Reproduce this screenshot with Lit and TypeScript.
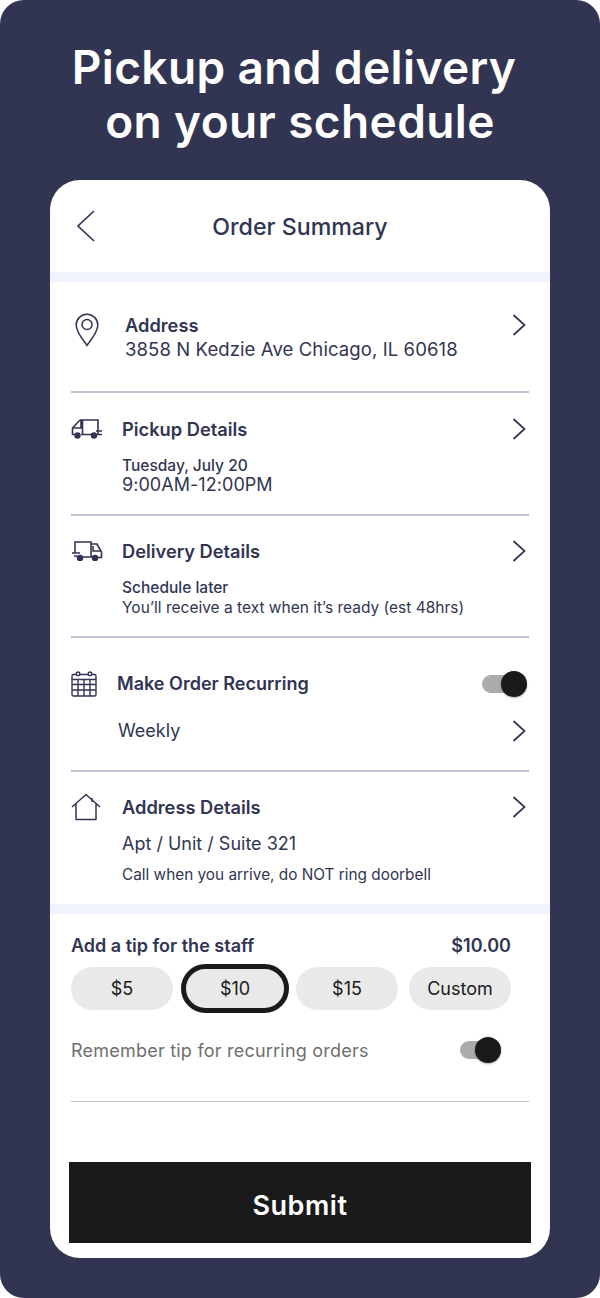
import { LitElement, html, css, svg } from "lit";
import { customElement } from "lit/decorators.js";

const chevron = html`<svg class="chev" width="14" height="24" viewBox="0 0 14 24"><path d="M1.5 2 L12.5 12 L1.5 22" fill="none" stroke="#313552" stroke-width="1.7"/></svg>`;

const pin = html`<svg width="24" height="34" viewBox="0 0 24 34" fill="none" stroke="#313552" stroke-width="1.5"><path d="M12 32.5 C10 29 1.2 20 1.2 12 A10.8 10.8 0 0 1 22.8 12 C22.8 20 14 29 12 32.5 Z"/><circle cx="12" cy="11.5" r="5"/></svg>`;

const truckL = html`<svg width="32" height="20" viewBox="0 0 32 20" fill="none" stroke="#313552" stroke-width="1.6"><path d="M9 1 H27 V15 M9 1 L1.5 9 V15.5 H4.5 M10 15.5 H21 M26 15.5 H31 M2 9 H10 V1 M11.5 15.5 V1 M25 12 H31"/><circle cx="6.5" cy="16.5" r="2.4" fill="#313552"/><circle cx="23" cy="16.5" r="2.4" fill="#313552"/></svg>`;

const truckR = html`<svg width="32" height="20" viewBox="0 0 32 20" fill="none" stroke="#313552" stroke-width="1.6"><path d="M4 12 V1 H20 V16 H12 M1 12 H9 M3 15 H6 M20 3 H26 L30.5 11 V16.5 H27 M20 16 H21 M22 5 V10 H30"/><circle cx="9" cy="17" r="2.5" fill="#313552"/><circle cx="24" cy="17" r="2.5" fill="#313552"/></svg>`;

const cal = html`<svg width="26" height="26" viewBox="0 0 26 26" fill="none" stroke="#313552" stroke-width="1.4"><rect x="1" y="3.5" width="24" height="21.5" rx="1.5"/>${svg`<path d="M1 8.5 H25 M1 13.5 H25 M1 19 H25 M7 8.5 V25 M13 8.5 V25 M19 8.5 V25" /><circle cx="7" cy="2.8" r="1.8" fill="#fff"/><circle cx="19" cy="2.8" r="1.8" fill="#fff"/>`}</svg>`;

const house = html`<svg width="30" height="28" viewBox="0 0 30 28" fill="none" stroke="#313552" stroke-width="1.5" stroke-linejoin="round"><path d="M1 14 L15 1.5 L29 14 M5 11 V26.5 H25 V11 M21 5 V9"/></svg>`;

@customElement("app-root")
export class AppRoot extends LitElement {
  static styles = css`
    :host { display: block; width: 600px; height: 1298px; background: #fff; font-family: Inter, "Liberation Sans", sans-serif; color: #313552; }
    * { box-sizing: border-box; }
    .page { width: 600px; height: 1298px; background: #313552; border-radius: 24px; padding-top: 40px; display: flex; flex-direction: column; align-items: center; }
    h1 { margin: 0; height: 140px; color: #fff; font-size: 46px; line-height: 54px; font-weight: 600; text-align: center; letter-spacing: 0.38px; white-space: nowrap; }
    .card { width: 500px; height: 1078px; background: #fff; border-radius: 30px; overflow: hidden; display: flex; flex-direction: column; }
    .head { height: 92px; padding: 0 26px; display: flex; align-items: center; position: relative; }
    .title { position: absolute; left: 0; right: 0; top: 31px; text-align: center; font-size: 23.2px; line-height: 32px; font-weight: 500; }
    .band { height: 10px; background: #f1f3fd; flex: none; }
    .sec { margin: 0 21px; border-bottom: 2px solid #c3c4d6; display: flex; flex-direction: column; flex: none; }
    .row { display: flex; align-items: center; }
    .grow { flex: 1; }
    .b { font-weight: 600; font-size: 18.25px; line-height: 24px; }
    .rec .b { font-size: 18.05px; }
    .addr { height: 111px; padding-top: 31px; flex-direction: row; align-items: flex-start; }
    .addr .ic { width: 54px; padding: 0 0 0 4px; }
    .addr .l { font-size: 18.5px; line-height: 25px; letter-spacing: 0.1px; }
    .pick { height: 123px; padding-top: 24px; }
    .deli { height: 122px; padding-top: 23px; }
    .rec { height: 134px; padding-top: 33px; }
    .adet { height: 132px; padding-top: 21px; border-bottom: 0; }
    .ic2 { width: 51px; display: flex; }
    .ic2.cal { width: 46px; }
    .sm { font-size: 15.5px; line-height: 20px; }
    .m { font-weight: 500; line-height: 21px; }
    .tl { font-size: 18px; line-height: 24px; margin-top: -3px; letter-spacing: 0.05px; }
    .sub { padding-left: 51px; margin-top: 14px; }
    .adv { padding-left: 51px; }
    .apt { margin-top: 11px; font-size: 18px; line-height: 24px; }
    .call { margin-top: 9px; font-size: 15.35px; }
    .toggle { width: 45px; height: 18px; background: #ababab; border-radius: 9px; position: relative; flex: none; margin-right: 2px; }
    .toggle::after { content: ""; position: absolute; right: 0; top: -4px; width: 26px; height: 26px; border-radius: 50%; background: #1a1a1a; box-shadow: 0 1px 2px rgba(0,0,0,.35); }
    .weekly { margin-top: 22px; padding-left: 47px; font-size: 18px; line-height: 24px; display: flex; align-items: center; justify-content: space-between; }
    .tip { margin: 0 21px; padding-top: 20px; height: 188px; border-bottom: 1.5px solid #bfc0d2; flex: none; }
    .tiph { width: 440px; display: flex; justify-content: space-between; font-weight: 600; font-size: 18px; line-height: 24px; }
    .pills { width: 440px; display: flex; margin-top: 9px; }
    .pill { width: 102px; height: 43px; border-radius: 22px; background: #e9e9e9; color: #1a1a1a; font-size: 18px; display: flex; align-items: center; justify-content: center; }
    .pill.on { width: 108px; height: 49px; margin: -3px 7px -3px 8px; border: 5px solid #1a1a1a; border-radius: 25px; }
    .pill.last { margin-left: 11px; }
    .rem { width: 430px; margin-top: 29px; display: flex; justify-content: space-between; align-items: center; color: #6f6f6f; font-size: 18px; letter-spacing: 0.22px; line-height: 24px; }
    .rem .toggle { width: 41px; margin: 0 0 2px; }
    .submit { margin: 60px 19px 0; height: 81px; padding-top: 6px; flex: none; background: #1a1a1a; color: #fff; font-size: 27px; font-weight: 600; letter-spacing: 0.55px; display: flex; align-items: center; justify-content: center; }
    .chev { flex: none; margin-right: 3px; }
  `;

  render() {
    return html`<div class="page">
      <h1>Pickup and delivery&nbsp;<br />on your schedule</h1>
      <div class="card">
        <div class="head">
          <svg width="20" height="34" viewBox="0 0 20 34"><path d="M18 2 L2 17 L18 32" fill="none" stroke="#313552" stroke-width="1.7"/></svg>
          <div class="title">Order Summary</div>
        </div>
        <div class="band"></div>
        <div class="sec addr">
          <div class="ic">${pin}</div>
          <div class="grow"><div class="b">Address</div><div class="l">3858 N Kedzie Ave Chicago, IL 60618</div></div>
          <div>${chevron}</div>
        </div>
        <div class="sec pick">
          <div class="row"><div class="ic2">${truckL}</div><div class="b grow">Pickup Details</div>${chevron}</div>
          <div class="sub"><div class="sm m">Tuesday, July 20</div><div class="tl">9:00AM-12:00PM</div></div>
        </div>
        <div class="sec deli">
          <div class="row"><div class="ic2">${truckR}</div><div class="b grow">Delivery Details</div>${chevron}</div>
          <div class="sub"><div class="sm m">Schedule later</div><div class="sm">You’ll receive a text when it’s ready (est 48hrs)</div></div>
        </div>
        <div class="sec rec">
          <div class="row"><div class="ic2 cal">${cal}</div><div class="b grow">Make Order Recurring</div><div class="toggle"></div></div>
          <div class="weekly"><span>Weekly</span>${chevron}</div>
        </div>
        <div class="sec adet">
          <div class="row"><div class="ic2">${house}</div><div class="b grow">Address Details</div>${chevron}</div>
          <div class="adv apt">Apt / Unit / Suite 321</div>
          <div class="adv sm call">Call when you arrive, do NOT ring doorbell</div>
        </div>
        <div class="band"></div>
        <div class="tip">
          <div class="tiph"><span>Add a tip for the staff</span><span>$10.00</span></div>
          <div class="pills">
            <div class="pill">$5</div><div class="pill on">$10</div><div class="pill">$15</div><div class="pill last">Custom</div>
          </div>
          <div class="rem"><span>Remember tip for recurring orders</span><div class="toggle"></div></div>
        </div>
        <div class="submit">Submit</div>
      </div>
    </div>`;
  }
}
